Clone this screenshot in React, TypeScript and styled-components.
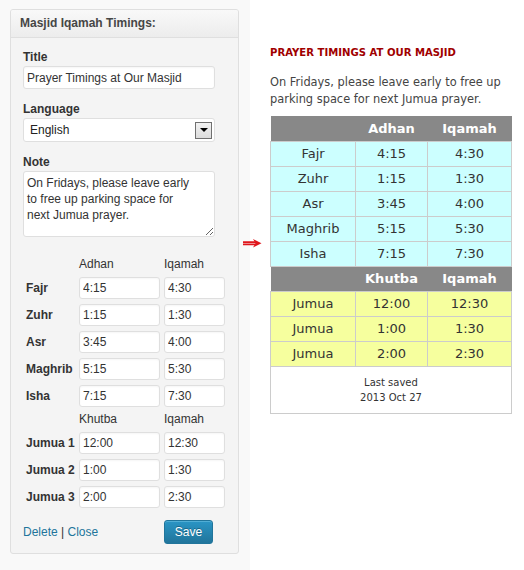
import React from 'react';
import styled, { createGlobalStyle } from 'styled-components';

const Global = createGlobalStyle`
  html, body { margin: 0; padding: 0; background: #ffffff; }
  body { width: 524px; height: 570px; overflow: hidden; }
  * { box-sizing: border-box; }
`;

const Page = styled.div`
  display: flex;
  align-items: flex-start;
  width: 524px;
  height: 570px;
`;

const Sidebar = styled.div`
  flex: 0 0 250px;
  height: 570px;
  background: #f9f9f9;
  padding: 9px 0 0 10px;
`;

const Widget = styled.div`
  width: 229px;
  border: 1px solid #dfdfdf;
  border-radius: 3px;
  background: #f4f4f4;
  font-family: "Liberation Sans", Arial, sans-serif;
  font-size: 12px;
  color: #333;
  overflow: hidden;
`;

const WidgetHeader = styled.div`
  height: 28px;
  line-height: 27px;
  padding-left: 9px;
  border-bottom: 1px solid #dfdfdf;
  background: linear-gradient(to bottom, #f9f9f9, #ececec);
  font-weight: bold;
  color: #464646;
`;

const WidgetBody = styled.div`
  padding: 12px 12px 9px 12px;
  display: flex;
  flex-direction: column;
`;

const Field = styled.div<{ $last?: boolean }>`
  display: flex;
  flex-direction: column;
  margin-bottom: ${(p) => (p.$last ? '0' : '13px')};
`;

const Label = styled.label`
  font-weight: bold;
  line-height: 15px;
  margin-bottom: 1px;
  color: #333;
`;

const TextInput = styled.input<{ $w?: number }>`
  width: ${(p) => (p.$w ? `${p.$w}px` : '192px')};
  height: ${(p) => (p.$w ? '22px' : '23px')};
  border: 1px solid #dfdfdf;
  border-radius: 3px;
  background: #fff;
  padding: 0 3px;
  font-family: "Liberation Sans", Arial, sans-serif;
  font-size: 12px;
  color: #333;
  outline: none;
  box-shadow: inset 0 1px 2px rgba(0, 0, 0, 0.04);
`;

const SelectBox = styled.div`
  width: 192px;
  height: 24px;
  border: 1px solid #dfdfdf;
  border-radius: 3px;
  background: #fff;
  display: flex;
  align-items: center;
  justify-content: space-between;
  padding: 0 2px 0 6px;
  color: #222;
`;

const DropButton = styled.div`
  width: 17px;
  height: 17px;
  border: 1px solid #707070;
  background: linear-gradient(to bottom, #f2f2f2, #dcdcdc);
  display: flex;
  align-items: center;
  justify-content: center;
`;

const Triangle = styled.div`
  width: 0;
  height: 0;
  border-left: 4px solid transparent;
  border-right: 4px solid transparent;
  border-top: 4px solid #000;
`;

const NoteArea = styled.textarea`
  width: 192px;
  height: 66px;
  border: 1px solid #dfdfdf;
  border-radius: 3px;
  background: #fff;
  padding: 3px 3px;
  font-family: "Liberation Sans", Arial, sans-serif;
  font-size: 12px;
  line-height: 16px;
  color: #333;
  resize: both;
  outline: none;
  overflow: hidden;
`;

const TimeGrid = styled.div`
  margin-top: 20px;
  padding-left: 3px;
  display: grid;
  grid-template-columns: 49px 81px 61px;
  column-gap: 4px;
  row-gap: 5px;
  align-items: center;
`;

const ColHead = styled.div`
  line-height: 15px;
  color: #333;
`;

const RowLabel = styled.div`
  font-weight: bold;
  color: #333;
  white-space: nowrap;
`;

const Footer = styled.div`
  margin-top: 12px;
  display: grid;
  grid-template-columns: 141px 49px;
  align-items: center;
`;

const Links = styled.div`
  color: #333;
`;

const Link = styled.a`
  color: #21759b;
  text-decoration: none;
`;

const SaveButton = styled.button`
  width: 49px;
  height: 24px;
  border: 1px solid #21759b;
  border-radius: 3px;
  background: linear-gradient(to bottom, #2a95c5, #21759b);
  color: #fff;
  font-family: "Liberation Sans", Arial, sans-serif;
  font-size: 12px;
  text-shadow: 0 -1px 0 rgba(0, 0, 0, 0.3);
  padding: 0;
  box-shadow: inset 0 1px 0 rgba(120, 200, 230, 0.5);
`;

const ArrowSlot = styled.div`
  flex: 0 0 20px;
  margin-left: -8px;
  padding-top: 234px;
`;

const Content = styled.div`
  flex: 0 0 241px;
  margin-left: 8px;
  padding-top: 46px;
  font-family: "DejaVu Sans", Verdana, sans-serif;
`;

const Heading = styled.h3`
  margin: 0;
  font-size: 10.1px;
  line-height: 13px;
  font-weight: bold;
  color: #a00000;
`;

const Notice = styled.p`
  margin: 15px 0 8px 0;
  font-size: 11.4px;
  line-height: 17px;
  color: #444;
`;

const Table = styled.table`
  width: 241px;
  border-collapse: collapse;
  table-layout: fixed;
  font-size: 13px;
`;

const HeadCell = styled.th`
  background: #888888;
  color: #fff;
  font-weight: bold;
  height: 25px;
  padding: 0;
  text-align: center;
  border: none;
`;

const Cell = styled.td<{ $tone: 'cyan' | 'yellow' }>`
  background: ${(p) => (p.$tone === 'cyan' ? '#ccffff' : '#f6ff9e')};
  border: 1px solid #cccccc;
  height: 25px;
  padding: 0;
  text-align: center;
  color: #333;
`;

const SavedCell = styled.td`
  border: 1px solid #cccccc;
  background: #fff;
  height: 47px;
  text-align: center;
  font-size: 10px;
  line-height: 15px;
  color: #333;
  padding: 0;
`;

const prayers = [
  ['Fajr', '4:15', '4:30'],
  ['Zuhr', '1:15', '1:30'],
  ['Asr', '3:45', '4:00'],
  ['Maghrib', '5:15', '5:30'],
  ['Isha', '7:15', '7:30'],
];

const jumuas = [
  ['12:00', '12:30'],
  ['1:00', '1:30'],
  ['2:00', '2:30'],
];

export default function App() {
  return (
    <>
      <Global />
      <Page>
        <Sidebar>
          <Widget>
            <WidgetHeader>Masjid Iqamah Timings:</WidgetHeader>
            <WidgetBody>
              <Field>
                <Label>Title</Label>
                <TextInput defaultValue="Prayer Timings at Our Masjid" />
              </Field>
              <Field>
                <Label>Language</Label>
                <SelectBox>
                  <span>English</span>
                  <DropButton>
                    <Triangle />
                  </DropButton>
                </SelectBox>
              </Field>
              <Field $last>
                <Label>Note</Label>
                <NoteArea
                  defaultValue={'On Fridays, please leave early\nto free up parking space for\nnext Jumua prayer.'}
                />
              </Field>
              <TimeGrid>
                <span />
                <ColHead>Adhan</ColHead>
                <ColHead>Iqamah</ColHead>
                {prayers.map(([name, a, i]) => (
                  <React.Fragment key={name}>
                    <RowLabel>{name}</RowLabel>
                    <TextInput $w={81} defaultValue={a} />
                    <TextInput $w={61} defaultValue={i} />
                  </React.Fragment>
                ))}
                <span />
                <ColHead>Khutba</ColHead>
                <ColHead>Iqamah</ColHead>
                {jumuas.map(([k, i], idx) => (
                  <React.Fragment key={k}>
                    <RowLabel>Jumua {idx + 1}</RowLabel>
                    <TextInput $w={81} defaultValue={k} />
                    <TextInput $w={61} defaultValue={i} />
                  </React.Fragment>
                ))}
              </TimeGrid>
              <Footer>
                <Links>
                  <Link href="#">Delete</Link> | <Link href="#">Close</Link>
                </Links>
                <SaveButton>Save</SaveButton>
              </Footer>
            </WidgetBody>
          </Widget>
        </Sidebar>
        <ArrowSlot>
          <svg width="20" height="10" viewBox="0 0 20 10">
            <path d="M1 4.2 L14 4.2 M1 6.3 L14 6.3" stroke="#e0161c" strokeWidth="1.7" />
            <path d="M11 1 L19.5 5.2 L11 9.4 L13.5 5.2 Z" fill="#e0161c" />
          </svg>
        </ArrowSlot>
        <Content>
          <Heading>PRAYER TIMINGS AT OUR MASJID</Heading>
          <Notice>On Fridays, please leave early to free up parking space for next Jumua prayer.</Notice>
          <Table>
            <colgroup>
              <col style={{ width: 85 }} />
              <col style={{ width: 72 }} />
              <col style={{ width: 84 }} />
            </colgroup>
            <tbody>
              <tr>
                <HeadCell />
                <HeadCell>Adhan</HeadCell>
                <HeadCell>Iqamah</HeadCell>
              </tr>
              {prayers.map(([name, a, i]) => (
                <tr key={name}>
                  <Cell $tone="cyan">{name}</Cell>
                  <Cell $tone="cyan">{a}</Cell>
                  <Cell $tone="cyan">{i}</Cell>
                </tr>
              ))}
              <tr>
                <HeadCell />
                <HeadCell>Khutba</HeadCell>
                <HeadCell>Iqamah</HeadCell>
              </tr>
              {jumuas.map(([k, i]) => (
                <tr key={k}>
                  <Cell $tone="yellow">Jumua</Cell>
                  <Cell $tone="yellow">{k}</Cell>
                  <Cell $tone="yellow">{i}</Cell>
                </tr>
              ))}
              <tr>
                <SavedCell colSpan={3}>
                  Last saved
                  <br />
                  2013 Oct 27
                </SavedCell>
              </tr>
            </tbody>
          </Table>
        </Content>
      </Page>
    </>
  );
}
